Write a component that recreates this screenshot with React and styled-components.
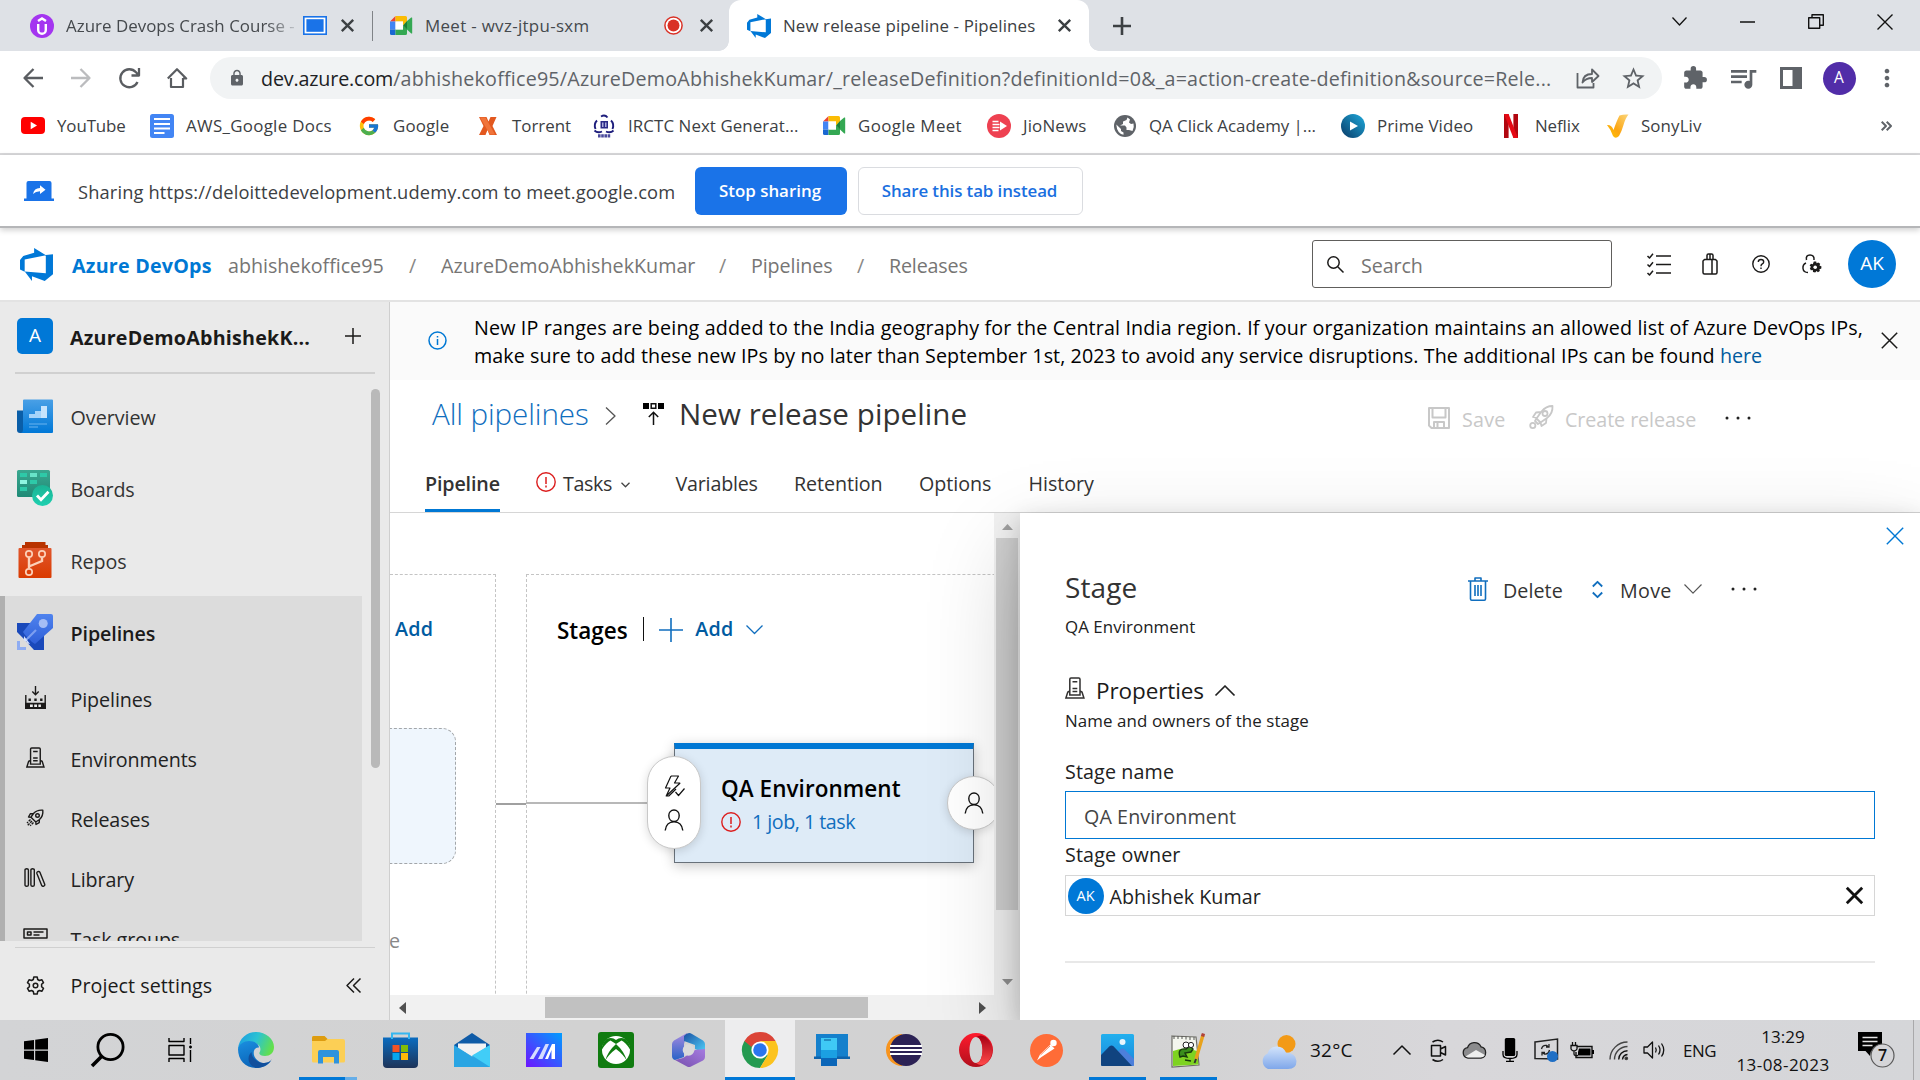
import React from 'react';
import styled, { createGlobalStyle, css } from 'styled-components';
import { MdLock, MdExtension, MdQueueMusic, MdStarBorder, MdMoreVert } from 'react-icons/md';
import { FcGoogle } from 'react-icons/fc';

const Global = createGlobalStyle`
  * { box-sizing: border-box; }
  html, body { margin: 0; padding: 0; }
  body { width: 1920px; height: 1080px; overflow: hidden; background: #fff; font-family: "Open Sans", "Noto Sans", sans-serif; color: #323130; }
  svg { display: block; flex: none; overflow: visible; }
`;

const T = styled.span`
  white-space: nowrap;
  font-size: ${p => p.$s || 19.7}px;
  font-weight: ${p => p.$w || 400};
  color: ${p => p.$c || '#212121'};
  letter-spacing: ${p => p.$ls || 0}px;
  line-height: 1.36;
`;

const Line = ({ w, h, d, c = 'currentColor', sw = 1.5 }) => (
  <svg width={w} height={h} viewBox={`0 0 ${w} ${h}`} fill="none" stroke={c} strokeWidth={sw} strokeLinejoin="round">
    <path d={d} />
  </svg>
);

const Screen = styled.div`
  width: 1920px;
  height: 1080px;
  display: flex;
  flex-direction: column;
  overflow: hidden;
`;
const Spacer = styled.div`
  flex: 1;
`;

/* ---------- browser chrome ---------- */
const TabStrip = styled.div`
  height: 51px;
  background: #dee1e6;
  display: flex;
`;
const Tab = styled.div`
  width: ${p => p.$w}px;
  height: 51px;
  padding: 0 ${p => p.$pr}px 0 ${p => p.$pl}px;
  display: flex;
  align-items: center;
  position: relative;
  ${p => p.$active && css`
    background: #fff;
    border-radius: 12px 12px 0 0;
    &::before, &::after {
      content: '';
      position: absolute;
      bottom: 0;
      width: 10px;
      height: 10px;
    }
    &::before { left: -10px; background: radial-gradient(circle at 0 0, transparent 9.5px, #fff 10px); }
    &::after { right: -10px; background: radial-gradient(circle at 100% 0, transparent 9.5px, #fff 10px); }
  `}
`;
const TabLabel = styled.div`
  flex: 1;
  min-width: 0;
  margin-left: 12px;
  display: flex;
  ${p => p.$fade && css`
    mask-image: linear-gradient(90deg, #000 200px, transparent 236px);
  `}
`;
const TabState = styled.div`
  margin-right: ${p => p.$mr}px;
`;
const TabSep = styled.div`
  width: 1px;
  height: 30px;
  margin-top: 11px;
  background: #808387;
`;
const NewTab = styled.div`
  width: 66px;
  display: flex;
  justify-content: center;
  align-items: center;
  color: #3c4043;
`;
const WinControls = styled.div`
  margin-left: auto;
  padding-right: 1px;
  display: flex;
  height: 43px;
`;
const WinBtn = styled.div`
  width: 68.5px;
  display: flex;
  align-items: center;
  justify-content: center;
  color: #111;
`;
const Toolbar = styled.div`
  height: 54px;
  display: flex;
  align-items: center;
  color: #5f6368;
`;
const NavBtn = styled.div`
  width: 48px;
  display: flex;
  justify-content: center;
  color: ${p => (p.$off ? '#bbbcbe' : '#5a5d61')};
`;
const NavGroup = styled.div`
  display: flex;
  width: 210px;
  padding-left: 9px;
`;
const Omnibox = styled.div`
  width: 1452px;
  height: 42px;
  border-radius: 21px;
  background: #f1f3f4;
  display: flex;
  align-items: center;
  padding: 0 15px 0 18px;
`;
const Url = styled.div`
  flex: 1;
  margin-left: 15px;
  padding-top: 2px;
  display: flex;
`;
const OmniIcon = styled.div`
  width: 47.5px;
  display: flex;
  justify-content: flex-end;
`;
const ExtGroup = styled.div`
  display: flex;
  align-items: center;
  margin-left: 9px;
`;
const ExtBtn = styled.div`
  width: 48px;
  display: flex;
  justify-content: center;
`;
const Profile = styled.div`
  width: 33px;
  height: 33px;
  border-radius: 50%;
  background: #512da8;
  display: flex;
  align-items: center;
  justify-content: center;
`;
const Bookmarks = styled.div`
  height: 50px;
  padding: 0 0 7px 21px;
  display: flex;
  align-items: center;
  border-bottom: 2px solid #d9d9db;
`;
const Bookmark = styled.div`
  width: ${p => p.$w}px;
  display: flex;
  align-items: center;
  gap: 12px;
`;
const BmIcon = styled.div`
  width: 24px;
  height: 24px;
  display: flex;
  align-items: center;
  justify-content: center;
`;
const BmLabel = styled.div`
  display: flex;
  margin-top: -1px;
`;
const ShareBar = styled.div`
  height: 73px;
  display: flex;
  align-items: center;
  padding-left: 24px;
  border-bottom: 2px solid #b5b6b8;
  box-shadow: 0 2px 6px rgba(0, 0, 0, .2);
  position: relative;
  z-index: 1;
`;
const ShareMsg = styled.div`
  width: 617px;
  margin-left: 24px;
  display: flex;
  padding-top: 4px;
`;
const ShareBtn = styled.div`
  width: ${p => p.$w}px;
  height: 48px;
  border-radius: 6px;
  display: flex;
  align-items: center;
  justify-content: center;
  padding-right: 2px;
  background: ${p => (p.$primary ? '#1a73e8' : '#fff')};
  border: ${p => (p.$primary ? 'none' : '1.5px solid #dadce0')};
  margin-right: 11px;
`;

/* ---------- Azure header ---------- */
const Header = styled.div`
  height: 74px;
  display: flex;
  align-items: center;
  padding: 0 24px 0 20px;
  border-bottom: 2px solid #e3e3e3;
`;
const Crumb = styled.div`
  width: ${p => p.$w}px;
  display: flex;
  padding-top: ${p => p.$pt === undefined ? 4 : p.$pt}px;
`;
const SearchBox = styled.div`
  width: 300px;
  height: 48px;
  margin-left: auto;
  border: 1.5px solid #605e5c;
  border-radius: 3px;
  display: flex;
  align-items: center;
  padding-left: 14px;
  gap: 17px;
`;
const HeaderIcons = styled.div`
  display: flex;
  align-items: center;
  margin-left: 21px;
  color: #1b1a19;
`;
const HeaderIcon = styled.div`
  width: 51px;
  display: flex;
  justify-content: center;
`;
const Avatar = styled.div`
  width: ${p => p.$d}px;
  height: ${p => p.$d}px;
  flex: none;
  border-radius: 50%;
  background: #0078d7;
  display: flex;
  align-items: center;
  justify-content: center;
  margin-left: ${p => p.$ml || 0}px;
`;

/* ---------- page body ---------- */
const Body = styled.div`
  height: 718px;
  display: flex;
  overflow: hidden;
`;
const Sidebar = styled.div`
  width: 390px;
  height: 100%;
  background: #eaeaea;
  border-right: 1.5px solid #cfcfcf;
  display: flex;
  flex-direction: column;
`;
const ProjectRow = styled.div`
  height: 70px;
  display: flex;
  align-items: center;
  padding: 0 28px 2px 17px;
`;
const ProjectTile = styled.div`
  width: 36px;
  height: 36px;
  border-radius: 5px;
  background: #0078d7;
  display: flex;
  align-items: center;
  justify-content: center;
  margin-right: 17px;
`;
const ProjectName = styled.div`
  display: flex;
  padding-top: 4px;
`;
const Rule = styled.div`
  height: ${p => p.$h}px;
  flex: none;
  margin: ${p => p.$mt || 0}px 14px 0 15px;
  background: #d0d0d0;
`;
const NavArea = styled.div`
  height: 567px;
  flex: none;
  display: flex;
  justify-content: space-between;
  overflow: hidden;
`;
const NavList = styled.div`
  width: 362px;
  padding-top: 6px;
`;
const NavItem = styled.div`
  height: 72px;
  display: flex;
  align-items: center;
  padding-left: ${p => (p.$in ? 12 : 17)}px;
  gap: 17.5px;
`;
const NavLabel = styled.div`
  display: flex;
  padding-top: 4px;
`;
const ActiveGroup = styled.div`
  background: #dcdcdc;
  border-left: 5px solid #b0b0b0;
`;
const SubItem = styled.div`
  height: 60px;
  display: flex;
  align-items: center;
  color: #1b1a19;
`;
const SubIcon = styled.div`
  width: 60px;
  margin: -1px 5.5px 0 0;
  display: flex;
  justify-content: center;
`;
const NavThumb = styled.div`
  width: 9px;
  height: 379px;
  border-radius: 5px;
  background: #b9b9b9;
  margin: 15px 9px 0 0;
`;
const SettingsRow = styled.div`
  flex: 1;
  display: flex;
  align-items: center;
  padding: 2px 28px 0 26px;
  color: #1b1a19;
`;
const SettingsLabel = styled.div`
  flex: 1;
  margin-left: 25.5px;
  display: flex;
  padding-top: 2px;
`;
const Main = styled.div`
  width: 1530px;
  height: 100%;
  display: flex;
  flex-direction: column;
`;
const Banner = styled.div`
  height: 78px;
  background: #fafafa;
  display: flex;
  align-items: center;
  padding: 0 22px 2px 38px;
`;
const BannerText = styled.div`
  width: 1413px;
  margin-left: 27px;
  display: flex;
  flex-direction: column;
  padding-top: 4px;
`;
const BannerLine = styled.div`
  height: 28px;
  display: flex;
  align-items: center;
`;
const TitleRow = styled.div`
  height: 68px;
  display: flex;
  align-items: center;
  padding-left: 42px;
`;
const TitlePart = styled.div`
  width: ${p => p.$w}px;
  display: flex;
  align-items: center;
  padding-top: ${p => p.$pt || 0}px;
`;
const Tabs = styled.div`
  height: 65px;
  padding-left: 35px;
  display: flex;
  border-bottom: 1.5px solid #d6d6d6;
`;
const PivotTab = styled.div`
  height: 64px;
  width: ${p => p.$w}px;
  margin-right: ${p => p.$mr}px;
  padding-top: 12px;
  display: flex;
  align-items: center;
  border-bottom: 3px solid ${p => (p.$active ? '#0078d4' : 'transparent')};
`;
const TaskMark = styled.div`
  margin: 0 7px 6px 0;
`;
const TaskArrow = styled.div`
  margin: 0 0 0 9px;
`;
const Work = styled.div`
  flex: 1;
  min-height: 0;
  display: flex;
`;
const CanvasArea = styled.div`
  width: 604px;
  height: 100%;
  display: flex;
  flex-direction: column;
`;
const Canvas = styled.div`
  flex: 1;
  position: relative;
  overflow: hidden;
  display: flex;
  padding-top: 61px;
`;
const Lane = styled.div`
  border-top: 1.5px dashed #c4c4c4;
  border-right: 1.5px dashed #c4c4c4;
  border-left: ${p => (p.$first ? 'none' : '1.5px dashed #c4c4c4')};
  width: ${p => p.$w}px;
  flex: none;
  margin-right: 30px;
  height: 500px;
`;
const LaneHead = styled.div`
  display: flex;
  align-items: center;
  height: 32px;
  margin-top: 40px;
  padding-left: ${p => p.$pl}px;
`;
const LaneDivider = styled.div`
  width: 1.5px;
  height: 24px;
  background: #111;
  margin: 0 15px 5px 15px;
`;
const LaneAdd = styled.div`
  display: flex;
  align-items: center;
  gap: 12px;
  padding-bottom: 3px;
`;
const ArtifactCard = styled.div`
  position: absolute;
  left: -60px;
  top: 215px;
  width: 126px;
  height: 136px;
  border: 1.5px dashed #a3a6a9;
  border-radius: 14px;
  background: #eff6fd;
`;
const ScheduleHint = styled.div`
  position: absolute;
  left: -1px;
  top: 415px;
  display: flex;
`;
const Wire = styled.div`
  position: absolute;
  left: ${p => p.$x}px;
  top: ${p => p.$y}px;
  width: ${p => p.$w}px;
  height: ${p => p.$h}px;
  background: ${p => p.$c};
`;
const StageNode = styled.div`
  position: absolute;
  left: 284px;
  top: 230px;
  width: 300px;
  height: 120px;
  background: #deebf7;
  border: 1.5px solid #68717a;
  border-top: 6px solid #0078d4;
  box-shadow: 0 3px 12px rgba(0, 0, 0, .22);
  padding: 25px 0 0 46px;
  display: flex;
  flex-direction: column;
`;
const NodeStatus = styled.div`
  display: flex;
  align-items: center;
  gap: 11px;
  margin-top: 4px;
`;
const NodePill = styled.div`
  position: absolute;
  left: ${p => p.$x}px;
  top: ${p => p.$y}px;
  width: 54px;
  height: ${p => p.$h}px;
  border-radius: 27px;
  background: #fff;
  border: 1.5px solid #c8c8c8;
  box-shadow: 0 2px 10px rgba(0, 0, 0, .15);
  display: flex;
  flex-direction: column;
  align-items: center;
  justify-content: center;
  gap: 12px;
  color: #111;
`;
const HScroll = styled.div`
  height: 25px;
  background: #f1f1f1;
  display: flex;
  align-items: center;
  padding: 0 8px 0 9px;
  justify-content: space-between;
`;
const HTrack = styled.div`
  flex: 1;
  padding-left: 139px;
`;
const HThumb = styled.div`
  width: 323px;
  height: 21px;
  background: #c1c1c1;
`;
const VScroll = styled.div`
  width: 26px;
  height: 100%;
  background: #f1f1f1;
  display: flex;
  flex-direction: column;
  align-items: center;
  padding: 11px 0 35px;
`;
const VThumb = styled.div`
  width: 22px;
  height: 372px;
  background: #d0d0d0;
  margin: 8px 0 auto;
`;
const Panel = styled.div`
  width: 900px;
  height: 100%;
  background: #fff;
  padding: 0 45px;
  box-shadow: 0 38px 86px rgba(0, 0, 0, .22), 0 7px 22px rgba(0, 0, 0, .18);
  position: relative;
  display: flex;
  flex-direction: column;
`;
const PanelClose = styled.div`
  height: 45px;
  margin-right: -29px;
  display: flex;
  justify-content: flex-end;
  align-items: center;
`;
const PRow = styled.div`
  height: ${p => p.$h}px;
  margin-top: ${p => p.$mt || 0}px;
  padding-top: ${p => p.$pt || 0}px;
  display: flex;
  align-items: center;
  flex: none;
`;
const PCell = styled.div`
  width: ${p => p.$w}px;
  display: flex;
  padding-top: ${p => p.$pt || 0}px;
`;
const NameInput = styled(PRow)`
  border: 1.5px solid #0078d4;
  padding: 5px 0 0 18px;
`;
const OwnerInput = styled(PRow)`
  border: 1.5px solid #d6d6d6;
  padding: 0 11px 0 1.5px;
`;
const OwnerName = styled.div`
  margin-left: 6px;
  padding-top: 4px;
  display: flex;
`;
const RaisedServer = styled.div`
  margin-top: -5px;
`;
const PanelRule = styled.div`
  height: 1.5px;
  flex: none;
  background: #e8e8e8;
  margin-top: 45px;
`;

/* ---------- taskbar ---------- */
const Taskbar = styled.div`
  height: 60px;
  flex: none;
  background: linear-gradient(90deg, #d3d4d6 0%, #d2d2d2 30%, #d2d2d3 60%, #d8d7da 75%, #d5d6d9 100%);
  display: flex;
  align-items: stretch;
`;
const TaskCell = styled.div`
  width: ${p => p.$w || 72}px;
  flex: none;
  display: flex;
  justify-content: center;
  align-items: center;
  background: ${p => (p.$active ? 'linear-gradient(#ededee, #ededee) center / 70px 100% no-repeat' : 'none')};
`;
const Running = styled.div`
  height: 100%;
  width: ${p => p.$w}px;
  display: flex;
  justify-content: center;
  align-items: center;
  background: linear-gradient(90deg, #0078d7 ${p => (p.$stack ? 79 : 100)}%, #66aee8 ${p => (p.$stack ? 79 : 100)}%) bottom / 100% 3px no-repeat;
`;
const TrayCell = styled.div`
  width: ${p => p.$w || 36}px;
  flex: none;
  display: flex;
  flex-direction: column;
  align-items: center;
  justify-content: center;
  color: #111;
`;
const Weather = styled.div`
  width: 123px;
  margin-left: 36px;
  flex: none;
  display: flex;
  align-items: center;
  gap: 13px;
`;
const WeatherTemp = styled.div`
  display: flex;
  padding-top: 2px;
`;
const Clock = styled(TrayCell)`
  justify-content: space-between;
  padding: 5px 0 4px;
`;
const DesktopEdge = styled.div`
  width: 7px;
  flex: none;
  border-left: 1.5px solid #a9a9ab;
`;

/* ---------- drawings ---------- */
const CloseX = ({ s = 13, sw = 2.4, c = '#3c4043' }) => <Line w={s} h={s} sw={sw} c={c} d={`M.8 .8L${s - .8} ${s - .8}M${s - .8} .8L.8 ${s - .8}`} />;
const DevOps = ({ s }) => (
  <svg width={s} height={s} viewBox="1 1 16 16.02"><path fill="#0078d7" d="M17 4v9.74l-4 3.28-6.2-2.26V17l-3.51-4.59 10.23.8V4.44zm-3.41.49L7.85 1v2.29L2.58 4.84 1 6.87v4.61l2.26 1V6.57z" /></svg>
);
const Udemy = () => (
  <svg width="24" height="24" viewBox="0 0 24 24"><circle cx="12" cy="12" r="12" fill="#a435f0" /><path d="M8.2 10v6a3.8 3.8 0 0 0 7.6 0v-6M8 7l4-2.6L16 7" fill="none" stroke="#fff" strokeWidth="2.4" /></svg>
);
const Cast = () => (
  <svg width="24" height="19" viewBox="0 0 24 19"><rect x=".8" y=".8" width="22.4" height="17.4" fill="#fff" stroke="#1a73e8" strokeWidth="1.6" /><rect x="3.4" y="3.2" width="17.2" height="12.6" fill="#1a73e8" /></svg>
);
const Recording = () => (
  <svg width="19" height="19" viewBox="0 0 19 19"><circle cx="9.5" cy="9.5" r="8.6" fill="#fff" stroke="#d93025" strokeWidth="1.5" /><circle cx="9.5" cy="9.5" r="6" fill="#d93025" /></svg>
);
const Meet = () => (
  <svg width="23" height="19" viewBox="0 0 23 19">
    <path d="M0 5.5L5.5 0v5.5z" fill="#ea4335" /><path d="M0 5.5h5.5v8H0z" fill="#4285f4" /><path d="M0 13.5h5.5V19H1.5A1.5 1.5 0 0 1 0 17.5z" fill="#1967d2" />
    <path d="M5.5 0h10A1.5 1.5 0 0 1 17 1.5V5.5l-4 4v-4H5.5z" fill="#fbbc04" /><path d="M5.5 13.5H13v-4l4 3.5v4.5a1.5 1.5 0 0 1-1.5 1.5h-10z" fill="#34a853" />
    <path d="M13 9.5l4-4.5v8.6z" fill="#188038" /><path d="M17 5l4.2-3.4q1-.6 1 .5v14.8q0 1.1-1 .5L17 13.6z" fill="#34a853" /><path d="M5.5 5.5H13v8H5.5z" fill="#fff" />
  </svg>
);
const YouTube = () => <svg width="24" height="17" viewBox="0 0 24 17"><rect width="24" height="17" rx="4" fill="#f00" /><path d="M9.7 4.8l6.3 3.7-6.3 3.7z" fill="#fff" /></svg>;
const Docs = () => <svg width="24" height="24" viewBox="0 0 24 24"><rect width="24" height="24" rx="2.5" fill="#4285f4" /><path d="M4 5h16M4 10h16M4 14.5h16M4 19h10.5" stroke="#fff" strokeWidth="2.2" /></svg>;
const Torrent = () => <svg width="18" height="18" viewBox="0 0 18 18"><path d="M0 0h7.500l2 4.500 2-4.500H17.500l-4 9 4.500 9h-7.500L8.500 13 6.500 18H0l4.500-9z" fill="#e2581f" /><path d="M1 .5h5.500l9.500 17h-5z" fill="#f0743a" /></svg>;
const Irctc = () => (
  <svg width="22" height="24" viewBox="0 0 22 24"><path d="M8 2.500Q12 .3 14.500 3.500M18 6.500Q21.500 10 19.500 15M4 6.500Q.5 10 2.500 15M1.500 16.500q3 3 7.500 1M20.500 16.500q-3 3-7.500 1" fill="none" stroke="#1d1d7c" strokeWidth="1.9" /><path d="M7.500 7h7.500v7.500H7.500z" fill="#2a2a86" /><path d="M9.800 8.500v4.500M12.800 8.500v4.500" stroke="#cfd0f0" strokeWidth="1.2" /><path d="M5 21.800h12.500" stroke="#4a4a9c" strokeWidth="3.200" strokeDasharray="2.600 .6" /></svg>
);
const Jio = () => <svg width="24" height="24" viewBox="0 0 24 24"><circle cx="12" cy="12" r="12" fill="#ee4151" /><path d="M13 7.500l7 4.500-7 4.500z" fill="#fff" /><path d="M5.500 7.500h6M5.500 10.500h7M5.500 13.500h7M5.500 16.500h6" stroke="#fff" strokeWidth="1.7" /></svg>;
const Globe = () => <svg width="22" height="22" viewBox="0 0 22 22"><circle cx="11" cy="11" r="11" fill="#5f6368" /><path d="M13.500 2.500l-1 2.500-3.500 1.500V9L6 10.500h5l1.500 2V15H15l3.500 1Q20.500 12.500 19.500 8.500L17 9l-2-1.500 1-3zM2.300 9.500L7 14v2l2.500 1.500v2.300Q3 18.500 2.300 9.500z" fill="#fff" /></svg>;
const Prime = () => <svg width="24" height="24" viewBox="0 0 24 24"><defs><linearGradient id="pv" x1="1" y1="0" x2="0" y2="1"><stop offset="0" stopColor="#1eaadc" /><stop offset="1" stopColor="#0a3a66" /></linearGradient></defs><circle cx="12" cy="12" r="12" fill="url(#pv)" /><path d="M9 7.500l8 4.500-8 4.500z" fill="#fff" /></svg>;
const Netflix = () => <svg width="14" height="24" viewBox="0 0 14 24"><path d="M0 0h4.600v24L0 24zM9.400 0H14v24H9.400z" fill="#b1060f" /><path d="M0 0h4.600L14 24H9.400z" fill="#e50914" /></svg>;
const Sony = () => <svg width="22" height="24" viewBox="0 0 22 24"><defs><linearGradient id="sl" x1="1" y1="0" x2="0" y2="1"><stop offset="0" stopColor="#fbd67c" /><stop offset=".6" stopColor="#fca510" /><stop offset="1" stopColor="#ffc800" /></linearGradient></defs><path d="M0 11q4.500-.5 6.500 5Q10 6 12.500 1.500 17 0 21.500.5 18.500 4 16.500 11T12 22q-3.500 3.500-6 0Q3.500 15 0 11z" fill="url(#sl)" /></svg>;
const Presenting = () => <svg width="30" height="20" viewBox="0 0 30 20"><path d="M4.500 0h21a2 2 0 0 1 2 2v15.500H30V20H0v-2.500h2.500V2a2 2 0 0 1 2-2z" fill="#1a73e8" /><path d="M9 13q1-6 7-6V4.300l5.500 4.400-5.500 4.300v-2.700q-4.500 0-7 2.700z" fill="#fff" /></svg>;

const Person = () => <Line w={20} h={22} sw={1.4} d="M10 1a5.200 5.200 0 0 1 5.200 5.500C15.200 10 13 12.500 10 12.500S4.800 10 4.800 6.500A5.200 5.200 0 0 1 10 1zM1.200 21.500c.5-5.300 4-8.800 8.800-8.800s8.300 3.500 8.800 8.800" />;
const Bolt = () => <Line w={21} h={22} sw={1.2} d="M7 1h7.500L10.500 8h5.700M7 1L1.500 13H6L2.200 21 16.200 8M2.200 21h2.600L12 14M11.500 17l3 3.500 6-7" />;
const ErrorRing = ({ s }) => <svg width={s} height={s} viewBox="0 0 20 20"><circle cx="10" cy="10" r="9.2" fill="none" stroke="#dc1e1e" strokeWidth="1.4" /><path d="M10 5v7M10 13.6v1.8" stroke="#dc1e1e" strokeWidth="1.5" /></svg>;
const Dots = ({ w = 26, r = 1.5 }) => <svg width={w} height="6" viewBox={`0 0 ${w} 6`} fill="#222"><circle cx="2" cy="3" r={r} /><circle cx={w / 2} cy="3" r={r} /><circle cx={w - 2} cy="3" r={r} /></svg>;
const Server = ({ s = 1 }) => (
  <svg width={20 * s} height={22 * s} viewBox="0 0 20 22" fill="none" stroke="currentColor" strokeWidth="1.5"><path d="M4.800 18V2.200Q4.800 1 6 1h7.800Q15 1 15 2.200V18zM7.500 4.800h4.800M7.500 11.500h4.800M7.500 14.500h4.800M4.800 14L2.800 15 .9 21h18l-1.900-6-2-1" /></svg>
);
const Rocket = ({ s = 18, c = 'currentColor' }) => (
  <svg width={s} height={s} viewBox="0 0 18 18" fill="none" stroke={c} strokeWidth="1.4" strokeLinejoin="round"><path d="M16.800 1.200Q11 .6 7.500 4.500L5 8.200l4.800 4.800 3.700-2.500q3.900-3.500 3.300-9.300zM7.500 4.600L4.300 4.800 2.500 8l2.700.2M13.400 10.500l-.2 3.200L10 15.500l-.2-2.700" /><circle cx="11.5" cy="6.5" r="1.8" /><path d="M4.500 10.500L1 14M6 12l-4.500 4.500M7.500 13.500L4.200 16.800" strokeDasharray="2.5 1" /></svg>
);
const RocketLaunch = () => (
  <svg width="25" height="24" viewBox="0 0 25 24" fill="none" stroke="#c8c8c8" strokeWidth="1.8" strokeLinejoin="round"><path d="M23.500 1Q17 1 12.500 6.500L7.500 13.500l4 4L18 13Q24 8.500 23.500 1zM12 7L7 7.500 4 12l4 1M17.500 13.500L17 18l-4.500 3-1-3.500M7.500 13.500L6 16l3 3 2.500-1.500" /><circle cx="16" cy="8.5" r="2.5" /><circle cx="3.8" cy="20.5" r="2.6" /></svg>
);
const Gear = () => (
  <svg width="19" height="19" viewBox="0 0 19 19" fill="none" stroke="currentColor" strokeWidth="1.5" strokeLinejoin="round"><path d="M7.800 1h3.400l.5 2.500 1.700 1 2.400-.8 1.700 2.900-1.900 1.700v2.400l1.900 1.700-1.700 2.900-2.400-.8-1.700 1-.5 2.500H7.800l-.5-2.500-1.700-1-2.400.8-1.700-2.900 1.900-1.700V8.300L1.500 6.600l1.700-2.900 2.400.8 1.700-1z" /><circle cx="9.5" cy="9.5" r="2.3" /></svg>
);

const OverviewIcon = () => (
  <svg width="36" height="36" viewBox="0 0 36 36"><defs><linearGradient id="ov" x1="0" y1="0" x2="0" y2="1"><stop offset="0" stopColor="#4aa0e6" /><stop offset="1" stopColor="#0078d7" /></linearGradient></defs><path d="M0 12.500h8V35H3q-3 0-3-3z" fill="#0a5ea8" /><path d="M6 2.500Q6 1.500 7 1.500h28q1 0 1 1V34q0 1-1 1H4q2-.5 2-3z" fill="url(#ov)" /><path d="M12 16h6v-3h6V8h6v12H12z" fill="#a5d3fa" /><path d="M24 8h6v12h-6z" fill="#c8e4fc" /><path d="M12 26h18M12 29h9" stroke="#6ab4f0" strokeWidth="1.2" /></svg>
);
const BoardsIcon = () => (
  <svg width="36" height="36" viewBox="0 0 36 36"><defs><linearGradient id="bo" x1="0" y1="0" x2="0" y2="1"><stop offset="0" stopColor="#3aa890" /><stop offset="1" stopColor="#1f8a76" /></linearGradient><linearGradient id="bc" x1="0" y1="0" x2="0" y2="1"><stop offset="0" stopColor="#1ab394" /><stop offset="1" stopColor="#1fd0b0" /></linearGradient></defs><rect width="33" height="27" rx="1.5" fill="url(#bo)" /><g fill="#2ec9a8"><path d="M3 3h7v4H3zM23 3h7v4h-7zM13 10h7v4h-7zM3 17h7v4H3z" /></g><path d="M13 3h7v4h-7z" fill="#68e3c8" /><path d="M3 10h7v4H3z" fill="#8ff5e0" /><circle cx="25.5" cy="25.5" r="10.5" fill="url(#bc)" /><path d="M20 25.500l4 4.200 7.500-8" fill="none" stroke="#fff" strokeWidth="2.8" /></svg>
);
const ReposIcon = () => (
  <svg width="36" height="36" viewBox="0 0 36 36"><defs><linearGradient id="rp" x1="0" y1="0" x2="0" y2="1"><stop offset="0" stopColor="#e0562c" /><stop offset="1" stopColor="#da3b01" /></linearGradient></defs><path d="M8 0h20.500v3H31v4H5V3h3z" fill="#b83300" /><rect x="1.5" y="6" width="33" height="30" rx="1" fill="url(#rp)" /><g fill="none" stroke="#fcd0b8" strokeWidth="1.7"><circle cx="12" cy="12" r="3.2" /><circle cx="25" cy="12" r="3.2" /><circle cx="12" cy="30" r="3.2" /><path d="M12 15.500V26.500M25 15.500v3.500L12 24.500" strokeWidth="2.4" /></g></svg>
);
const PipelinesIcon = () => (
  <svg width="36" height="36" viewBox="0 0 36 36"><defs><linearGradient id="pp" x1="0" y1="0" x2="0" y2="1"><stop offset="0" stopColor="#4f83ee" /><stop offset="1" stopColor="#2f5fd8" /></linearGradient></defs><path d="M0 9h14L27 20v16H17L6 24 0 18z" fill="#1a49ba" /><path d="M20 0h14q2 0 2 2v12L18 30l-3-2-7-7-2-3z" fill="url(#pp)" /><circle cx="26.2" cy="9.500" r="4.5" fill="#a5bdf5" /><path d="M8.500 26.500L19 16" stroke="#7d9ff0" strokeWidth="2.2" /><path d="M7 22l6 8-2.500-.5-1-2-2.500-1z" fill="#d7e2fd" /><path d="M0 27h3v6h6v3H0z" fill="#8eacf2" /></svg>
);
const BuildIcon = () => <svg width="21" height="23" viewBox="0 0 21 23"><path d="M10.500 0v8.500M7.300 5.600l3.200 3.200 3.200-3.200M.8 9v13M20.200 9v13" fill="none" stroke="#1b1a19" strokeWidth="1.4" /><path d="M0 16.800h21V23H0zM3.500 12.500h2.400v2.600H3.500zM9.300 12.500h2.400v2.600H9.300zM15.100 12.500h2.400v2.600h-2.400z" fill="#1b1a19" /><path d="M5 18.500h2.800V21H5zM9.200 18.500H12V21H9.200zM13.400 18.500h2.500V21h-2.500z" fill="#eee" /></svg>;
const LibraryIcon = () => <Line w={22} h={19} sw={1.4} d="M1 2q0-1.200 1.700-1.200T4.400 2v15q0 1.200-1.700 1.200T1 17zM6.900 2q0-1.200 1.700-1.200T10.300 2v15q0 1.200-1.700 1.200T6.900 17zM12.800 5.200q-.2-1 1-1.500 1.400-.5 2 .4l5 12.500q.2 1-1 1.500-1.400.5-2-.4z" />;
const TaskGroupIcon = () => <Line w={25} h={20} sw={1.5} d="M1 10V1h23v9zM4.500 4h3.500v3H4.500zM10.500 4h10M10.500 7h6M3.500 14h18v5h-18z" />;

const Start = () => <svg width="24" height="24" viewBox="0 0 24 24"><path d="M0 3.300L10 2v9.500H0zM11.200 1.700L24 0v11.500H11.200zM0 12.700h10v9.300L0 20.700zM11.200 12.700H24V24l-12.800-1.700z" /></svg>;
const TaskSearch = () => <svg width="34" height="34" viewBox="0 0 34 34"><circle cx="19.5" cy="14" r="12.6" fill="none" stroke="#000" strokeWidth="2.8" /><path d="M11 23L1 33" stroke="#000" strokeWidth="3.6" /></svg>;
const TaskView = () => <Line w={24} h={24} sw={1.4} c="#000" d="M1 0v3.500h15V0M1 7.500h15v9.500H1zM1 24v-3.500h15V24M22.500 0v6M22.500 12v12M22.500 7.500v3M21 9h3" />;
const Edge = () => (
  <svg width="36" height="36" viewBox="0 0 36 36"><defs><linearGradient id="e1" x1="0" y1=".2" x2="1" y2=".5"><stop offset="0" stopColor="#1b9de2" /><stop offset=".5" stopColor="#2bc3d2" /><stop offset="1" stopColor="#63e04a" /></linearGradient><linearGradient id="e2" x1="0" y1="0" x2=".4" y2="1"><stop offset="0" stopColor="#1b8fe0" /><stop offset="1" stopColor="#0a63b8" /></linearGradient></defs><path d="M0 17C1 6 9 0 18 0c10 0 18 7 18 15 0 6-4 9-9 9-4 0-6.500-1.500-5.500-3.500 2.500-4 0-9.500-6.500-9.500C8 11 2 14 0 17z" fill="url(#e1)" /><path d="M0 17c1-5 6-8 11-8 5.500 0 10 3 10 6.500-6-1-8 9 0 14 4 2.500 9 1.500 12-.5C29 34 24 36 18 36 7 36 0 27.500 0 17z" fill="url(#e2)" /><path d="M13.500 20c0 6 6 11.500 12.500 11 3 0 5.500-1 8-4-5 8-13 9-16 8.700C9 33 9 24 13.500 20z" fill="#124f9c" /></svg>
);
const Explorer = () => <svg width="33" height="28" viewBox="0 0 33 28"><path d="M0 1.500Q0 0 1.500 0h11L15.500 3H31q2 0 2 2v20q0 1.500-1.500 1.500h-30Q0 26.500 0 25z" fill="#fccf55" /><path d="M0 1.500Q0 0 1.500 0h11L15.500 3 13 5H0z" fill="#dd9c10" /><path d="M6 16q0-2 2-2h17q2 0 2 2v11.500h-5V21H11v6.500H6z" fill="#2f93dd" /></svg>;
const Store = () => <svg width="35" height="36" viewBox="0 0 35 36"><defs><linearGradient id="st" x1="0" y1="0" x2="0" y2="1"><stop offset="0" stopColor="#0a6cc0" /><stop offset="1" stopColor="#1d3358" /></linearGradient></defs><path d="M0 5.500h35V32q0 4-4 4H4q-4 0-4-4z" fill="url(#st)" /><path d="M9 7V1.500h17V7" fill="none" stroke="#35b6f0" strokeWidth="2" /><path d="M9.500 13h7v7h-7z" fill="#f35325" /><path d="M18 13h7v7h-7z" fill="#81bc06" /><path d="M9.500 21h7v7h-7z" fill="#05a6f0" /><path d="M18 21h7v7h-7z" fill="#ffba08" /></svg>;
const Mail = () => <svg width="36" height="34" viewBox="0 0 36 34"><path d="M0 12L18 0l18 12v8H0z" fill="#0f5ba7" /><path d="M4 10.500h28V16L18 23 4 16z" fill="#f2f2f3" /><path d="M0 12l18 11.500L36 12v22H0z" fill="#2aa5e3" /><path d="M36 12v22L18 22.500z" fill="#41cdf7" /></svg>;
const Asus = () => <svg width="36" height="34" viewBox="0 0 36 34"><defs><linearGradient id="as" x1="1" y1="0" x2="0" y2="1"><stop offset="0" stopColor="#009dff" /><stop offset="1" stopColor="#6d14ff" /></linearGradient></defs><rect width="36" height="34" fill="url(#as)" /><path d="M3.500 26l7.500-12h3.500L7.500 26zM12 26l7.500-15h3.500l-6.500 15z" fill="#d5dcff" /><path d="M19 26l7-15h3v15h-3.500V17L22 26z" fill="#fff" /></svg>;
const Xbox = () => <svg width="36" height="36" viewBox="0 0 36 36"><rect width="36" height="36" rx="3" fill="#107c10" /><circle cx="18" cy="18" r="14" fill="#fff" /><path d="M8.500 7Q14 4.500 18 8q4-3.500 9.500-1Q32 11 32.500 18q-5-8-9-9.500L18 12l-5.500-3.500Q8.500 10 3.500 18 4 11 8.500 7zM7 29q3-10 11-17 8 7 11 17-4-7-11-12Q11 22 7 29z" fill="#107c10" /></svg>;
const M365 = () => <svg width="33" height="34" viewBox="0 0 33 34"><defs><linearGradient id="m1" x1="0" y1="0" x2="0" y2="1"><stop offset="0" stopColor="#a98ae0" /><stop offset="1" stopColor="#2763c7" /></linearGradient><linearGradient id="m2" x1="0" y1="0" x2="1" y2="1"><stop offset="0" stopColor="#1b52a4" /><stop offset="1" stopColor="#4fd1fa" /></linearGradient><linearGradient id="m3" x1="0" y1="1" x2="1" y2="0"><stop offset="0" stopColor="#7750ad" /><stop offset="1" stopColor="#a57be0" /></linearGradient></defs><path d="M15 0L2 7.500Q0 9 0 11v12q0 3 3 4l9-3V11z" fill="url(#m1)" /><path d="M12 3q4-4.500 8-2l11 6.500q2 1.500 2 3.500v9l-10-4v-4L12 8z" fill="url(#m2)" /><path d="M33 16v8q0 2-2 3.500L19 33.500q-2 1-4 0L3 27l8-2 12-8z" fill="url(#m3)" /><circle cx="16.5" cy="17" r="5.8" fill="#d9d9da" /></svg>;
const Chrome = () => <svg width="36" height="36" viewBox="0 0 36 36"><path d="M18 18L2.400 9A18 18 0 0 1 33.600 9z" fill="#db4437" /><path d="M18 18L2.400 9A18 18 0 0 0 18 36l8-13z" fill="#249a50" /><path d="M18 18l15.600-9A18 18 0 0 1 18 36l8-13.500z" fill="#fcc31e" /><path d="M18 9h15.600L26 18z" fill="#fcc31e" /><path d="M2.400 9L10 22l8-4z" fill="#249a50" /><path d="M2.400 9h31.200H18a9 9 0 0 0-8.500 6z" fill="#db4437" /><circle cx="18" cy="18" r="8.6" fill="#fff" /><circle cx="18" cy="18" r="6.8" fill="#2a75ee" /></svg>;
const PhoneLink = () => <svg width="36" height="32" viewBox="0 0 36 32"><path d="M2 0h32v22.500h2V25H0v-2.500h2z" fill="#0f63ab" /><path d="M2 0h32v22.500H2z" fill="#1580cc" /><path d="M7 4h16v12H7z" fill="#3fc9f5" /><path d="M7 16h16v8H7z" fill="#1ba0e2" /><path d="M7 24h16v8H7z" fill="#0b66b8" /><path d="M10 6h7" stroke="#1a7ab0" strokeWidth="1.5" /></svg>;
const Eclipse = () => <svg width="36" height="32" viewBox="0 0 36 32"><path d="M16 0A16 16 0 0 0 16 32z" fill="#f7941e" /><circle cx="20" cy="16" r="16" fill="#2c2255" /><path d="M4 12h32M4 16h32M4 20h32" stroke="#fff" strokeWidth="2" /></svg>;
const Opera = () => <svg width="34" height="34" viewBox="0 0 34 34"><defs><linearGradient id="op" x1="0" y1="0" x2="0" y2="1"><stop offset="0" stopColor="#ff1b2d" /><stop offset="1" stopColor="#b10f1c" /></linearGradient><linearGradient id="oq" x1="0" y1="0" x2="0" y2="1"><stop offset="0" stopColor="#a70014" /><stop offset="1" stopColor="#ff4b4b" /></linearGradient></defs><path fillRule="evenodd" d="M17 0a17 17 0 0 1 0 34 17 17 0 0 1 0-34zm0 4c-4 0-6.500 6-6.500 13S13 30 17 30s6.500-6 6.500-13S21 4 17 4z" fill="url(#op)" /><path d="M17 4q5-3 9.500 0A17 17 0 0 1 27 30.500q-5 3-10-.5c4 0 6.500-6 6.500-13S21 4 17 4z" fill="url(#oq)" /></svg>;
const Postman = () => <svg width="33" height="33" viewBox="0 0 33 33"><circle cx="16.5" cy="16.5" r="16.5" fill="#ff6c37" /><circle cx="23.5" cy="9" r="3.2" fill="#fff" /><path d="M20.500 10.500l4 4L11.500 23l-4.500 3.500 3-6z" fill="#fff" /><path d="M10.500 21L20 12" stroke="#ff6c37" strokeWidth=".8" /></svg>;
const Photos = () => <svg width="33" height="32" viewBox="0 0 33 32"><defs><linearGradient id="ph" x1="0" y1="0" x2="0" y2="1"><stop offset="0" stopColor="#22b0ee" /><stop offset="1" stopColor="#1b86dc" /></linearGradient></defs><rect width="33" height="32" rx="1.5" fill="url(#ph)" /><circle cx="21.5" cy="8" r="3" fill="#eaf6fd" /><path d="M14 20l6-5q1.500-1.200 3 0l10 10v5.500q0 1.500-1.500 1.500H15z" fill="#4c7fdb" /><path d="M0 21l8.500-8.700q2-1.800 4 0L31 32H1.500Q0 32 0 30.500z" fill="#10437f" /></svg>;
const Notepad = () => <svg width="35" height="35" viewBox="0 0 35 35"><path d="M1 3l24 1 3 28-27 2z" fill="#f4f6ee" stroke="#6d6d66" strokeWidth="1.2" /><path d="M2 18q12-5 24 0l1.500 13.500L2 33z" fill="#7ed321" /><path d="M3 3v3M7 3v3M11 3v3M15 3.500v3M19 4v3M23 4v3" stroke="#555" /><path d="M9 24q-3-9 6-8l4-3 3 3-2 3-6 1 2 4-4-1zM14 27l6 1" fill="#3a8f1c" stroke="#17390d" strokeWidth="1.4" /><circle cx="15" cy="12" r="3" fill="#fff" stroke="#222" /><circle cx="20" cy="12" r="2.6" fill="#fff" stroke="#222" /><path d="M32 2L25 26" stroke="#e8a21c" strokeWidth="3.4" /><path d="M31.500 3.500l1-3" stroke="#b0413a" strokeWidth="3.4" /><path d="M25 26l-1.500 4" stroke="#333" strokeWidth="2" /></svg>;
const WeatherIcon = () => <svg width="37" height="37" viewBox="0 0 37 37"><defs><linearGradient id="we" x1="0" y1="0" x2="0" y2="1"><stop offset="0" stopColor="#d3e4fb" /><stop offset="1" stopColor="#7fa7ea" /></linearGradient></defs><circle cx="26.5" cy="12" r="9" fill="#f39a16" /><path d="M8 37a8.500 8.500 0 0 1-.5-15.500A9.800 9.800 0 0 1 26 20.500q10 .5 10.500 8.500 0 8-8.500 8z" fill="url(#we)" /></svg>;
const CamIcon = () => <Line w={17} h={23} sw={1.5} d="M1.500 6.500h9v10.500h-9zM10.500 10l5-2.500v8.500l-5-2.500M2.500 3Q8 -.5 13 3M2.500 20.500Q8 24 13 20.500" />;
const Cloud = () => <svg width="25" height="18" viewBox="0 0 25 18"><path d="M6 17a5.200 5.200 0 0 1-.5-10.300A7.300 7.300 0 0 1 19 5.800 5.700 5.700 0 0 1 19 17z" fill="#8b8b8d" stroke="#222" strokeWidth="1.3" /><path d="M3.500 15.500L14 9l9 5q-1.500 2.500-4.500 2.500H6z" fill="#eee" /></svg>;
const Mic = () => <svg width="16" height="24" viewBox="0 0 16 24"><rect x="2.8" y="0" width="10.4" height="18" rx="1.5" /><path d="M1 13v3.500Q1 20.500 8 20.500t7-4V13M8 20v3M4 23.300h8" fill="none" stroke="#000" strokeWidth="1.3" /></svg>;
const Update = () => <svg width="25" height="24" viewBox="0 0 25 24"><path d="M1 4l22.500-3v20L1 20.500z" fill="none" stroke="#222" strokeWidth="1.5" /><path d="M7.500 11q1-4 5-3.500l2 1.200M15.500 12q-1 4.500-5 4l-2-1.200M15 6v3h-3M8 17.500v-3h3" fill="none" stroke="#222" strokeWidth="1.3" /><circle cx="18.5" cy="18.5" r="5.5" fill="#1f6fc5" /></svg>;
const Battery = () => <svg width="24" height="17" viewBox="0 0 24 17"><path d="M7 4.500h15v11H6V10" fill="none" stroke="#111" strokeWidth="1.4" /><path d="M9 6.500h11.500v7H8V10zM22 8h2v4h-2z" /><path d="M1 3.500h6V7q-1 2-3 2T1 7zM2.500 0v3.500M5.500 0v3.500M4 9v3q0 2 4 1.500" fill="none" stroke="#111" strokeWidth="1.3" /></svg>;
const Wifi = () => <svg width="19" height="19" viewBox="0 0 19 19" fill="none" stroke="#444" strokeWidth="1.4"><path d="M1 18.500A17.500 17.500 0 0 1 18.500 1" /><path d="M5.500 18.500a13 13 0 0 1 13-13" /><path d="M9.700 18.500a8.800 8.800 0 0 1 8.800-8.800" stroke="#111" /><path d="M13.500 18.500q.5-4.500 5-5" stroke="#111" /><circle cx="17.3" cy="17.3" r="1.2" fill="#111" /></svg>;
const Volume = () => <Line w={23} h={18} sw={1.3} d="M1 6h3.500L9.500 1v16l-5-5H1zM12.500 6.500q1.500 2.500 0 5M15.500 4.500q3 4.500 0 9M18.500 2.500q4.500 6.500 0 13" />;
const Notify = () => <svg width="37" height="36" viewBox="0 0 37 36"><path d="M0 0h24v19H13l-1 5-4.500-5H0z" fill="#000" /><path d="M4.500 5.500h15M4.500 9.500h15M4.500 13.500h10" stroke="#e4e4e4" strokeWidth="1.4" /><circle cx="24.5" cy="23.5" r="11.5" fill="#d5d5d8" stroke="#5a5a5a" strokeWidth="1.2" /><text x="24.5" y="29.2" textAnchor="middle" fontFamily="Open Sans, sans-serif" fontWeight="600" fontSize="16" fill="#111">7</text></svg>;

const ShareIcon = () => <Line w={24} h={22} sw={1.8} d="M1.500 6v14.500h16V16M6.500 15.500q.5-8.500 9.500-8.500V2.500l6.500 6.500-6.500 6V11q-6 0-9.500 4.500z" />;
const SidePanel = () => <svg width="22" height="22" viewBox="0 0 22 22"><path fillRule="evenodd" d="M0 0h22v22H0zM3 3v16h9.500V3z" fill="#5f6368" /></svg>;
const ListIcon = () => <Line w={24} h={22} sw={1.5} d="M9 3h15M9 11.500h15M9 20h15M.5 3l2 2L6 .8M.5 11.500l2 2L6 9.300M.5 20l2 2L6 17.800" />;
const BagIcon = () => <Line w={16} h={22} sw={1.5} d="M2.500 6.500h11L15 8v11.500q0 1.500-1.500 1.500h-11Q1 21 1 19.500V8zM5 6.500v-4Q5 1 6.500 1h3Q11 1 11 2.500v4M8 1v5.500M10 6.500V21" />;
const HelpIcon = () => <svg width="18" height="18" viewBox="0 0 18 18" fill="none" stroke="currentColor" strokeWidth="1.4"><circle cx="9" cy="9" r="8.2" /><path d="M6.300 7Q6.300 4.500 9 4.500T11.700 7Q11.700 8.300 10 9.200 9 9.800 9 11.200M9 12.600v1.500" /></svg>;
const UserGear = () => <svg width="20" height="20" viewBox="0 0 20 20"><path d="M4.500 6Q3.500 1 8 1t4 5M4 9Q.5 10.500 1 14.500T6 18.500" fill="none" stroke="#1b1a19" strokeWidth="1.5" /><path d="M11.800 7.500h2.400l.4 1.700 1.600-.8 2 1.400-.7 1.700 2 1-.3 2.200-1.700.4.300 2-1.900 1.200-1.300-1.200-1.400 1.500-2.200-.7-.2-1.900-2 .2-1-2.100 1.300-1.200L7.600 11.500 9 9.700l1.800.6z" fill="#1b1a19" /><circle cx="13.2" cy="13.3" r="1.8" fill="#fff" /></svg>;

const BOOKMARKS = [
  ['YouTube', 129, <YouTube />, -0.1], ['AWS_Google Docs', 207, <Docs />, .3], ['Google', 119, <FcGoogle size={22} />, .15], ['Torrent', 116, <Torrent />, 0],
  ['IRCTC Next Generat...', 230, <Irctc />, .08], ['Google Meet', 165, <Meet />, .35], ['JioNews', 126, <Jio />, .15], ['QA Click Academy |...', 228, <Globe />, -.04],
  ['Prime Video', 158, <Prime />, .1], ['Neflix', 108, <Netflix />, -.1], ['SonyLiv', 0, <Sony />, .1],
];
const NAV = [['Overview', <OverviewIcon />, 0], ['Boards', <BoardsIcon />, -.15], ['Repos', <ReposIcon />, -.1]];
const SUBNAV = [['Pipelines', <BuildIcon />], ['Environments', <Server s={.95} />], ['Releases', <Rocket />], ['Library', <LibraryIcon />], ['Task groups', <TaskGroupIcon />]];
const TASKS = [
  [<Edge />], [<Explorer />, 58, true], [<Store />], [<Mail />], [<Asus />], [<Xbox />], [<M365 />], [<Chrome />, 70, false, true],
  [<PhoneLink />], [<Eclipse />], [<Opera />], [<Postman />], [<Photos />, 57], [<Notepad />, 57],
];
const TRAY = [<Line w={18} h={10} sw={1.5} d="M.5 9.500L9 1l8.500 8.500" />, <CamIcon />, <Cloud />, <Mic />, <Update />, <Battery />, <Wifi />, <Volume />];

function BrowserChrome() {
  return (
    <>
      <TabStrip>
        <Tab $w={372} $pl={30} $pr={18}>
          <Udemy />
          <TabLabel $fade><T $s={16.9} $c="#45494d" $ls={.03}>Azure Devops Crash Course -</T></TabLabel>
          <TabState $mr={14}><Cast /></TabState>
          <CloseX />
        </Tab>
        <TabSep />
        <Tab $w={356} $pl={17} $pr={16}>
          <Meet />
          <TabLabel><T $s={16.9} $c="#45494d" $ls={.33}>Meet - wvz-jtpu-sxm</T></TabLabel>
          <TabState $mr={17}><Recording /></TabState>
          <CloseX />
        </Tab>
        <Tab $w={360} $pl={18} $pr={18} $active>
          <DevOps s={24} />
          <TabLabel><T $s={16.9} $c="#3c4043" $ls={.11}>New release pipeline - Pipelines</T></TabLabel>
          <CloseX />
        </Tab>
        <NewTab><Line w={18} h={18} sw={2.6} d="M9 0v18M0 9h18" /></NewTab>
        <WinControls>
          <WinBtn><Line w={15} h={9} sw={1.3} d="M.5 .5l7 7.500 7-7.500" /></WinBtn>
          <WinBtn><Line w={15} h={2} sw={1.5} d="M0 1h15" /></WinBtn>
          <WinBtn><Line w={16} h={15} sw={1.4} d="M.7 3.700h11v10.600H.7zM4 3.500V.7h11.300v10.600H12" /></WinBtn>
          <WinBtn><Line w={16} h={16} sw={1.4} d="M.5 .5l15 15M15.500 .5l-15 15" /></WinBtn>
        </WinControls>
      </TabStrip>
      <Toolbar>
        <NavGroup>
          <NavBtn><Line w={20} h={20} sw={2.3} d="M20 10H2M10.500 1L1.500 10l9 9" /></NavBtn>
          <NavBtn $off><Line w={20} h={20} sw={2.3} d="M0 10h18M9.500 1l9 9-9 9" /></NavBtn>
          <NavBtn><Line w={21} h={20} sw={2.3} d="M18.500 14A9 9 0 1 1 17 4.200l2.500 2.800M20 0v7.500h-7.500" /></NavBtn>
          <NavBtn><Line w={20} h={20} sw={2.2} d="M4 10v9h12v-9M.8 10.500L10 1.200l9.200 9.300H16" /></NavBtn>
        </NavGroup>
        <Omnibox>
          <MdLock size={18} color="#5f6368" />
          <Url><T $c="#202124" $ls={-.15}>dev.azure.com</T><T $c="#5f6368" $ls={.205}>/abhishekoffice95/AzureDemoAbhishekKumar/_releaseDefinition?definitionId=0&amp;_a=action-create-definition&amp;source=Rele...</T></Url>
          <OmniIcon><ShareIcon /></OmniIcon>
          <OmniIcon><MdStarBorder size={27} /></OmniIcon>
        </Omnibox>
        <ExtGroup>
          <ExtBtn><MdExtension size={26} /></ExtBtn>
          <ExtBtn><MdQueueMusic size={32} /></ExtBtn>
          <ExtBtn><SidePanel /></ExtBtn>
          <ExtBtn><Profile><T $s={15.5} $c="#fff">A</T></Profile></ExtBtn>
          <ExtBtn><MdMoreVert size={28} /></ExtBtn>
        </ExtGroup>
      </Toolbar>
      <Bookmarks>
        {BOOKMARKS.map(([label, w, icon, ls]) => (
          <Bookmark key={label} $w={w}><BmIcon>{icon}</BmIcon><BmLabel><T $s={16.9} $c="#3c4043" $ls={ls}>{label}</T></BmLabel></Bookmark>
        ))}
        <Spacer />
        <Bookmark $w={39}><Line w={11} h={10} sw={2} c="#5f6368" d="M.7 .8L5 5 .7 9.200M5.700 .8L10 5 5.700 9.200" /></Bookmark>
      </Bookmarks>
      <ShareBar>
        <Presenting />
        <ShareMsg><T $s={18.3} $c="#3c4043" $ls={.14}>Sharing https://deloittedevelopment.udemy.com to meet.google.com</T></ShareMsg>
        <ShareBtn $w={152} $primary><T $s={16.9} $w={600} $c="#fff">Stop sharing</T></ShareBtn>
        <ShareBtn $w={225}><T $s={16.9} $w={600} $c="#1a6fe0" $ls={-.1}>Share this tab instead</T></ShareBtn>
      </ShareBar>
    </>
  );
}

function AzureHeader() {
  return (
    <Header>
      <Crumb $w={52} $pt={0}><DevOps s={33} /></Crumb>
      <Crumb $w={156}><T $w={700} $c="#0078d4" $ls={.22}>Azure DevOps</T></Crumb>
      <Crumb $w={181}><T $c="#767574" $ls={-.02}>abhishekoffice95</T></Crumb>
      <Crumb $w={32}><T $c="#8a8886">/</T></Crumb>
      <Crumb $w={278}><T $c="#767574" $ls={.02}>AzureDemoAbhishekKumar</T></Crumb>
      <Crumb $w={32}><T $c="#8a8886">/</T></Crumb>
      <Crumb $w={106}><T $c="#767574" $ls={-.1}>Pipelines</T></Crumb>
      <Crumb $w={32}><T $c="#8a8886">/</T></Crumb>
      <Crumb $w={90}><T $c="#767574" $ls={-.17}>Releases</T></Crumb>
      <SearchBox>
        <Line w={17} h={17} sw={1.5} c="#1b1a19" d="M10.500 10.500L16.500 16.500M6.500 .8a5.700 5.700 0 1 1 0 11.400 5.700 5.700 0 0 1 0-11.400z" />
        <Crumb $w={90}><T $c="#767574" $ls={-.1}>Search</T></Crumb>
      </SearchBox>
      <HeaderIcons>
        <HeaderIcon><ListIcon /></HeaderIcon>
        <HeaderIcon><BagIcon /></HeaderIcon>
        <HeaderIcon><HelpIcon /></HeaderIcon>
        <HeaderIcon><UserGear /></HeaderIcon>
        <Avatar $d={48} $ml={11}><T $c="#fff" $s={19}>AK</T></Avatar>
      </HeaderIcons>
    </Header>
  );
}

function SideNav() {
  return (
    <Sidebar>
      <ProjectRow>
        <ProjectTile><T $c="#fff" $s={19}>A</T></ProjectTile>
        <ProjectName><T $w={700} $c="#1b1a19" $ls={.2}>AzureDemoAbhishekK...</T></ProjectName>
        <Spacer />
        <Line w={16} h={16} sw={1.5} c="#1b1a19" d="M8 0v16M0 8h16" />
      </ProjectRow>
      <Rule $h={2} />
      <NavArea>
        <NavList>
          {NAV.map(([label, icon, ls]) => <NavItem key={label}>{icon}<NavLabel><T $c="#333" $ls={ls}>{label}</T></NavLabel></NavItem>)}
          <ActiveGroup>
            <NavItem $in><PipelinesIcon /><NavLabel><T $w={600} $c="#1b1a19" $ls={-.1}>Pipelines</T></NavLabel></NavItem>
            {SUBNAV.map(([label, icon]) => <SubItem key={label}><SubIcon>{icon}</SubIcon><NavLabel><T $c="#222" $ls={-.1}>{label}</T></NavLabel></SubItem>)}
          </ActiveGroup>
        </NavList>
        <NavThumb />
      </NavArea>
      <Rule $h={1} $mt={6} />
      <SettingsRow>
        <Gear />
        <SettingsLabel><T $c="#1b1a19" $ls={.05}>Project settings</T></SettingsLabel>
        <Line w={15} h={15} sw={1.5} d="M8 .5L1 7.500l7 7M14.500 .5l-7 7 7 7" />
      </SettingsRow>
    </Sidebar>
  );
}

function StageCanvas() {
  return (
    <CanvasArea>
      <Canvas>
        <Lane $w={106} $first>
          <LaneHead $pl={5}><LaneAdd><T $w={600} $c="#005ba1" $ls={.2}>Add</T></LaneAdd></LaneHead>
        </Lane>
        <Lane $w={620}>
          <LaneHead $pl={30}>
            <T $s={22.5} $w={600} $c="#000">Stages</T>
            <LaneDivider />
            <LaneAdd>
              <Line w={24} h={24} sw={1.6} c="#106ebe" d="M12 0v24M0 12h24" />
              <T $w={600} $c="#005ba1" $ls={.3}>Add</T>
              <Line w={17} h={10} sw={1.3} c="#106ebe" d="M.5 .5l8 8 8-8" />
            </LaneAdd>
          </LaneHead>
        </Lane>
        <ArtifactCard />
        <ScheduleHint><T $c="#888">e</T></ScheduleHint>
        <Wire $x={106} $y={290} $w={30} $h={1.5} $c="#a0a0a0" />
        <Wire $x={136} $y={289} $w={122} $h={2} $c="#b8b8b8" />
        <StageNode>
          <T $s={22.5} $w={600} $c="#000" $ls={.05}>QA Environment</T>
          <NodeStatus><ErrorRing s={20} /><T $c="#106ebe" $ls={-.5}>1 job, 1 task</T></NodeStatus>
        </StageNode>
        <NodePill $x={257} $y={243} $h={93}><Bolt /><Person /></NodePill>
        <NodePill $x={557} $y={263} $h={54}><Person /></NodePill>
      </Canvas>
      <HScroll>
        <svg width="7" height="12" viewBox="0 0 7 12"><path d="M7 0v12L0 6z" fill="#505050" /></svg>
        <HTrack><HThumb /></HTrack>
        <svg width="7" height="12" viewBox="0 0 7 12"><path d="M0 0v12l7-6z" fill="#505050" /></svg>
      </HScroll>
    </CanvasArea>
  );
}

function StagePanel() {
  return (
    <Panel>
      <PanelClose><CloseX s={18} sw={1.4} c="#0078d4" /></PanelClose>
      <PRow $h={58}>
        <PCell $w={403}><T $s={28} $c="#333" $ls={.1}>Stage</T></PCell>
        <PCell $w={35} $pt={4}><Line w={20} h={24} sw={1.6} c="#106ebe" d="M0 4h20M2.500 4v18q0 1.200 1.200 1.200h12.600q1.200 0 1.200-1.200V4M7 4V1h6v3M7 8v11M10 8v11M13 8v11" /></PCell>
        <PCell $w={89} $pt={8}><T $c="#333" $ls={.05}>Delete</T></PCell>
        <PCell $w={28} $pt={5}><Line w={11} h={17} sw={1.8} c="#106ebe" d="M.8 5.500L5.500 .8l4.700 4.700M.8 11.500l4.700 4.700 4.700-4.700" /></PCell>
        <PCell $w={64} $pt={8}><T $c="#333" $ls={.3}>Move</T></PCell>
        <PCell $w={47} $pt={3}><Line w={18} h={10} sw={1.2} c="#555" d="M.5 .5L9 9.200 17.500 .5" /></PCell>
        <PCell $w={40} $pt={3}><Dots /></PCell>
      </PRow>
      <PRow $h={21}><T $s={16.9} $c="#212121" $ls={.05}>QA Environment</T></PRow>
      <PRow $h={30} $mt={38}>
        <PCell $w={31}><RaisedServer><Server /></RaisedServer></PCell>
        <PCell $w={119} $pt={3}><T $s={22.5} $c="#1b1a19" $ls={-.1}>Properties</T></PCell>
        <Line w={20} h={11} sw={1.7} c="#222" d="M.5 10.500L10 1l9.500 9.500" />
      </PRow>
      <PRow $h={31}><T $s={16.9} $c="#212121" $ls={.1}>Name and owners of the stage</T></PRow>
      <PRow $h={29} $mt={21} $pt={2}><T $ls={.12}>Stage name</T></PRow>
      <NameInput $h={48} $mt={5}><T $c="#444" $ls={.08}>QA Environment</T></NameInput>
      <PRow $h={29} $mt={1} $pt={2}><T $ls={.15}>Stage owner</T></PRow>
      <OwnerInput $h={41} $mt={6}>
        <Avatar $d={36}><T $s={14.5} $c="#fff">AK</T></Avatar>
        <OwnerName><T $ls={.03}>Abhishek Kumar</T></OwnerName>
        <Spacer />
        <CloseX s={17} sw={2.8} c="#111" />
      </OwnerInput>
      <PanelRule />
    </Panel>
  );
}

function Workspace() {
  return (
    <Main>
      <Banner>
        <svg width="19" height="19" viewBox="0 0 19 19" fill="none" stroke="#0078d4" strokeWidth="1.5"><circle cx="9.5" cy="9.5" r="8.5" /><path d="M9.500 8v6M9.500 5v1.600" /></svg>
        <BannerText>
          <BannerLine><T $c="#000" $ls={.15}>New IP ranges are being added to the India geography for the Central India region. If your organization maintains an allowed list of Azure DevOps IPs,</T></BannerLine>
          <BannerLine><T $c="#000" $ls={.085}>make sure to add these new IPs by no later than September 1st, 2023 to avoid any service disruptions. The additional IPs can be found <T $c="#005a9e" $ls={0}>here</T></T></BannerLine>
        </BannerText>
        <CloseX s={17} sw={1.5} c="#1b1a19" />
      </Banner>
      <TitleRow>
        <TitlePart $w={173} $pt={1}><T $s={29.6} $w={300} $c="#106ebe" $ls={-.1}>All pipelines</T></TitlePart>
        <TitlePart $w={38} $pt={3}><Line w={11} h={18} sw={1.3} c="#555" d="M1 .5L10 9l-9 8.500" /></TitlePart>
        <TitlePart $w={36}><svg width="21" height="22" viewBox="0 0 21 22"><path d="M0 0h6v6H0zM15 0h6v6h-6z" /><path d="M8.200 .8h4.600v4.400H8.200zM10.500 22V9.500M5.800 14l4.700-4.700 4.700 4.700" fill="none" stroke="#111" strokeWidth="1.5" /></svg></TitlePart>
        <TitlePart $w={749} $pt={1}><T $s={29.6} $c="#333" $ls={.05}>New release pipeline</T></TitlePart>
        <TitlePart $w={34} $pt={7}><Line w={22} h={22} sw={2} c="#c8c8c8" d="M1 1h20v20H3.500L1 18.500zM4.500 1v9.500h13V1M6 21v-6h10v6M9.500 16v5" /></TitlePart>
        <TitlePart $w={67} $pt={12}><T $c="#c8c8c8" $ls={.2}>Save</T></TitlePart>
        <TitlePart $w={36} $pt={6}><RocketLaunch /></TitlePart>
        <TitlePart $w={160} $pt={12}><T $c="#c8c8c8" $ls={-.07}>Create release</T></TitlePart>
        <TitlePart $w={30} $pt={7}><Dots /></TitlePart>
      </TitleRow>
      <Tabs>
        <PivotTab $w={75} $mr={36} $active><T $w={600} $c="#333" $ls={-.15}>Pipeline</T></PivotTab>
        <PivotTab $w={95} $mr={44.5}>
          <TaskMark><ErrorRing s={20} /></TaskMark>
          <T $c="#333" $ls={-.4}>Tasks</T>
          <TaskArrow><Line w={9} h={6} sw={1.3} c="#444" d="M.5 .7l4 4 4-4" /></TaskArrow>
        </PivotTab>
        <PivotTab $w={83} $mr={35.5}><T $c="#333" $ls={-.2}>Variables</T></PivotTab>
        <PivotTab $w={89} $mr={36}><T $c="#333" $ls={-.07}>Retention</T></PivotTab>
        <PivotTab $w={74} $mr={35.5}><T $c="#333" $ls={-.05}>Options</T></PivotTab>
        <PivotTab $w={66} $mr={0}><T $c="#333" $ls={-.05}>History</T></PivotTab>
      </Tabs>
      <Work>
        <StageCanvas />
        <VScroll>
          <svg width="11" height="6" viewBox="0 0 11 6"><path d="M0 6h11L5.500 0z" fill="#a0a0a0" /></svg>
          <VThumb />
          <svg width="11" height="6" viewBox="0 0 11 6"><path d="M0 0h11L5.500 6z" fill="#909090" /></svg>
        </VScroll>
        <StagePanel />
      </Work>
    </Main>
  );
}

function WindowsTaskbar() {
  return (
    <Taskbar>
      <TaskCell><Start /></TaskCell>
      <TaskCell $w={71}><TaskSearch /></TaskCell>
      <TaskCell $w={74}><TaskView /></TaskCell>
      <TaskCell $w={3} />
      {TASKS.map(([icon, run, stack, active], i) => (
        <TaskCell key={i} $w={i > 9 ? 71 : 72} $active={active}>
          {run ? <Running $w={run} $stack={stack}>{icon}</Running> : icon}
        </TaskCell>
      ))}
      <Weather><WeatherIcon /><WeatherTemp><T $s={19} $c="#111" $ls={.2}>32°C</T></WeatherTemp></Weather>
      <TaskCell $w={1} />
      {TRAY.map((icon, i) => <TrayCell key={i}>{icon}</TrayCell>)}
      <TrayCell $w={55}><T $s={16.9} $c="#111" $ls={-.4}>ENG</T></TrayCell>
      <Clock $w={112}><T $s={17} $c="#111">13:29</T><T $s={17} $c="#111" $ls={.45}>13-08-2023</T></Clock>
      <TrayCell $w={74}><Notify /></TrayCell>
      <DesktopEdge />
    </Taskbar>
  );
}

export default function App() {
  return (
    <Screen>
      <Global />
      <BrowserChrome />
      <AzureHeader />
      <Body>
        <SideNav />
        <Workspace />
      </Body>
      <WindowsTaskbar />
    </Screen>
  );
}
